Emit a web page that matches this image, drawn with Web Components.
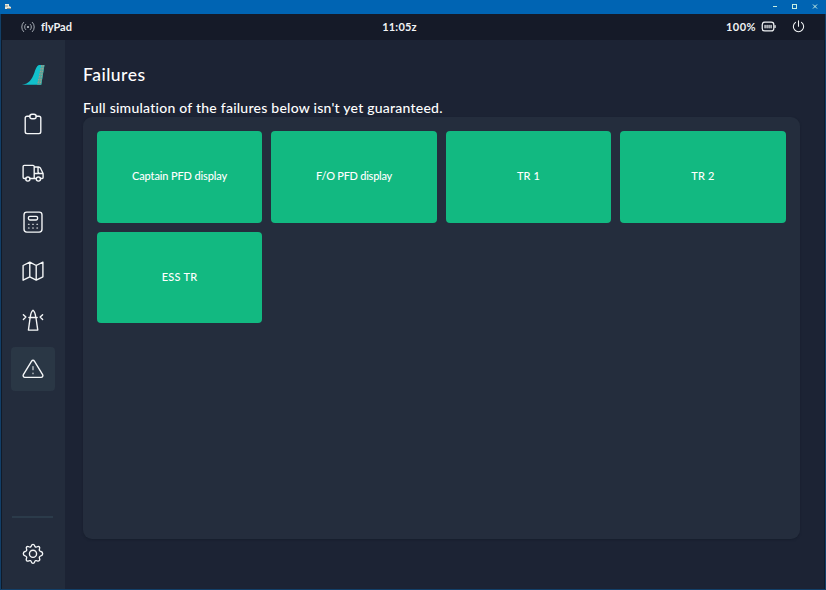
<!DOCTYPE html>
<html lang="en"><head><meta charset="utf-8"><title>flyPad</title>
<style>html,body{margin:0;height:100%;overflow:hidden;background:#1c2334}body{font-family:Lato,"Noto Sans",sans-serif;color:#fff}</style></head>
<body><fly-app></fly-app>
<script>
const define=(name,html,setup)=>{
  const t=document.createElement('template');t.innerHTML=html;
  customElements.define(name,class extends HTMLElement{
    connectedCallback(){
      if(this.shadowRoot)return;
      this.attachShadow({mode:'open'}).append(t.content.cloneNode(true));
      if(setup)setup(this);
    }
  });
};

/* Text line tracked out to the width given in its "span" attribute. */
define('tracked-text',`<style>:host{display:inline-block;white-space:nowrap}</style><span><slot></slot></span>`,el=>{
  const s=el.shadowRoot.querySelector('span');
  const n=el.textContent.length,w=s.getBoundingClientRect().width;
  s.style.letterSpacing=((+el.getAttribute('span')-w)/n)+'px';
});

const ICONS={
  tail:'<path d="M-.2 22.500C8 21.500 10.500 17 13.500 9.500 15.500 4 16.500 1.200 19.500 1.200h5L21 22.500z" fill="#11c0cb" stroke="none"/><path d="M21.200 1.200h3.300L21 22.500h-4.500z" fill="#4fa79b" stroke="none"/><path d="M21.300 1.500l-4 20.500M23.200 1.500l-3.400 20.500" stroke="#bd9488" stroke-width="1" stroke-dasharray="1.500 1.500" stroke-linecap="butt"/>',
  clipboard:'<path d="M8.500 3.500H5.500A2 2 0 0 0 3.500 5.500V20.500a2 2 0 0 0 2 2h13a2 2 0 0 0 2-2V5.500a2 2 0 0 0-2-2h-3"/><rect x="8.500" y="1.300" width="7" height="5" rx="2.400"/>',
  truck:'<path d="M4.300 18H2.500a1.300 1.300 0 0 1-1.300-1.300V5A1.300 1.300 0 0 1 2.500 3.700H12a1.300 1.300 0 0 1 1.300 1.300V18H8.500M13.300 5.500H18c1 0 1.700.5 2.200 1.300L23 12.500v4.500a1 1 0 0 1-1 1h-2M15.700 18h-2.400M13.300 12.500h9.500M17.500 6v4.500a2 2 0 0 0 2 2"/><circle cx="6.400" cy="18.600" r="2.300"/><circle cx="17.900" cy="18.600" r="2.300"/>',
  calculator:'<rect x="2.200" y="1.200" width="19.600" height="21.800" rx="3"/><rect x="7" y="5.800" width="10" height="4" rx="1.500"/><g stroke-width="1.200"><path d="M7 14.500h.8M11.600 14.500h.8M16.200 14.500h.8M7 18.500h.8M11.600 18.500h.8M16.200 18.500h.8"/></g>',
  map:'<path d="M1.200 6L8.500 2.300l7 3.700 7.300-3.700V18.300L15.500 22l-7-3.700L1.200 22zM8.500 2.300v16M15.500 6v16"/>',
  tower:'<path d="M7 23h10.200L15.200 9.300h-6.300zM9 9.300C9.300 5.500 10.500 2.500 12 1.300c1.500 1.200 2.700 4.200 3 8M7.500 9.300h9M1.500 6.200l2.700 2.600-2.700 2.600M22.500 6.200l-2.700 2.600 2.700 2.600"/>',
  alert:'<path d="M10.500 3.300L1.500 18.200A1.900 1.900 0 0 0 3.100 21.100h17.800a1.900 1.900 0 0 0 1.600-2.900L13.500 3.300a1.750 1.750 0 0 0-3 0z"/><path d="M12 9.300v3.500M12 16.300v.8" stroke-width="1.100"/>',
  gear:'<path d="M10.300 2.900C10.800 1 13.200 1 13.700 2.900c.4 1.500 1.500 2 2.900 1.200 1.900-1 3.200.5 2.500 2.300-.6 1.300-.2 2.400 1.500 2.900 2.600.8 2.600 3.800 0 4.700-1.700.6-2.100 1.700-1.400 3.100.8 1.700-.8 3.100-2.500 2.500-1.400-.8-2.600-.3-3 1.200-.5 1.900-2.900 1.900-3.400 0-.4-1.500-1.600-2-3-1.200-1.700.7-3.300-.8-2.500-2.500.7-1.400.3-2.500-1.400-3.100-2.600-.9-2.600-3.900 0-4.700 1.700-.5 2.100-1.600 1.500-2.900-.7-1.800.6-3.300 2.500-2.300 1.400.8 2.500.3 2.900-1.200z"/><circle cx="12" cy="11.800" r="3.900"/>',
  signal:'<circle cx="12" cy="12" r="1.900" fill="currentColor" stroke="none"/><path d="M8 7.500a6 6 0 0 0 0 9M16 7.500a6 6 0 0 1 0 9M4.500 4a11 11 0 0 0 0 16M19.500 4a11 11 0 0 1 0 16"/>',
  battery:'<rect x="2" y="5" width="18.500" height="14" rx="4"/><path d="M6.500 10v4M9.700 10v4M12.900 10v4M16.100 10v4M22.500 10.500v3" stroke-width="2"/>',
  power:'<path d="M12 1.500v10M17.500 4.300a9.500 9.500 0 1 1-11 0"/>'
};
define('line-icon',`<style>:host{display:block;width:22px;height:22px}svg{display:block;width:100%;height:100%;overflow:visible}</style><svg viewBox="0 0 24 24" fill="none" stroke="currentColor" stroke-width="1.500" stroke-linecap="round" stroke-linejoin="round"></svg>`,el=>{
  const s=el.shadowRoot.querySelector('svg');s.innerHTML=ICONS[el.getAttribute('name')];
  if(el.hasAttribute('weight'))s.setAttribute('stroke-width',el.getAttribute('weight'));
});

define('window-bar',`<style>:host{display:flex;height:14px;box-sizing:border-box;background:#0064b3;align-items:center;justify-content:space-between;padding:0 6px 1px 4px}svg{display:block}</style>
<svg width="8" height="7" viewBox="0 0 8 7"><path d="M1 1h4v2l2 1v2H1z" fill="#e5e8dd"/><path d="M1 3h3M3 5.500h4" stroke="#746f60" stroke-width=".7"/></svg>
<svg width="50" height="9" viewBox="0 0 50 9" fill="none" stroke="#c7eee2"><path d="M3 4.500h4"/><rect x="22.500" y="2.500" width="4" height="4"/><path d="M43 2.500l4 4M47 2.500l-4 4"/></svg>`);

define('status-bar',`<style>:host{display:grid;grid-template-columns:1fr auto 1fr;align-items:center;height:26px;box-sizing:border-box;background:#151a28;padding:0 20px 1px 19px;font-size:11px;line-height:14px;font-weight:700;color:#f1f3f5}
div{display:flex;align-items:center}.time{margin:0 13px 0 -13px}.r{justify-content:flex-end}.sig{width:14px;height:14px;margin-right:6px;color:#b9bfc6}.bat{width:15px;height:15px;margin:0 16px 0 5px}.pow{width:13px;height:13px;margin-right:-1px}</style>
<div><line-icon class="sig" name="signal"></line-icon><tracked-text span="31">flyPad</tracked-text></div>
<tracked-text class="time" span="34.500">11:05z</tracked-text>
<div class="r"><tracked-text span="30">100%</tracked-text><line-icon class="bat" name="battery" weight="2"></line-icon><line-icon class="pow" name="power" weight="2"></line-icon></div>`);

define('nav-item',`<style>:host{display:flex;width:44px;height:44px;align-items:center;justify-content:center;border-radius:4px;color:#f5f7f8}:host([active]){background:#2a3745}</style><line-icon></line-icon>`,el=>{
  const i=el.shadowRoot.querySelector('line-icon'),n=document.createElement('line-icon');
  n.setAttribute('name',el.getAttribute('icon'));i.replaceWith(n);
});
define('side-nav',`<style>:host{display:flex;flex-direction:column;align-items:center;width:63px;box-sizing:border-box;background:#232c3c;padding:13px 2px 13px 0}
nav{display:flex;flex-direction:column;gap:5px}hr{width:41px;height:2px;border:0;background:#2b3b4a;margin:auto 0 14px}</style>
<nav><nav-item icon="tail"></nav-item><nav-item icon="clipboard"></nav-item><nav-item icon="truck"></nav-item><nav-item icon="calculator"></nav-item><nav-item icon="map"></nav-item><nav-item icon="tower"></nav-item><nav-item icon="alert" active></nav-item></nav><hr><nav-item icon="gear"></nav-item>`);

define('failure-tile',`<style>:host{display:flex;align-items:center;justify-content:center;box-sizing:border-box;height:91.500px;border-radius:4px;background:#12b981;font-size:11px;font-weight:500;line-height:16px;padding-bottom:2px}</style><slot></slot>`);

define('failures-page',`<style>:host{display:block;box-sizing:border-box;padding:25px 24.500px 0 18px}
h1{margin:0;height:20px;line-height:20px;font-size:17.500px;font-weight:500}p{margin:14px 0 0;height:18px;line-height:18px;font-size:14px;font-weight:500}
section{height:422px;box-sizing:border-box;background:#242d3d;border-radius:9px;padding:14px;display:grid;grid-template-columns:repeat(4,1fr);gap:9.300px;align-content:start;box-shadow:0 1px 2px #171e2d}</style>
<h1><tracked-text span="62.500">Failures</tracked-text></h1><p><tracked-text span="360">Full simulation of the failures below isn't yet guaranteed.</tracked-text></p>
<section><failure-tile><tracked-text span="95">Captain PFD display</tracked-text></failure-tile><failure-tile><tracked-text span="76">F/O PFD display</tracked-text></failure-tile><failure-tile><tracked-text span="23">TR 1</tracked-text></failure-tile><failure-tile><tracked-text span="23.500">TR 2</tracked-text></failure-tile><failure-tile><tracked-text span="35.500">ESS TR</tracked-text></failure-tile></section>`);

define('fly-app',`<style>:host{display:flex;flex-direction:column;width:826px;height:590px;background:#1c2334}
.body{flex:1;display:flex;flex-direction:column;box-sizing:border-box;border:1px solid #123f68;border-top:0}.in{flex:1;display:flex;flex-direction:column;border:solid #101b2a;border-width:0 1px}
main{flex:1;display:flex}failures-page{flex:1}</style>
<window-bar></window-bar><div class="body"><div class="in"><status-bar></status-bar><main><side-nav></side-nav><failures-page></failures-page></main></div></div>`);
</script></body></html>
